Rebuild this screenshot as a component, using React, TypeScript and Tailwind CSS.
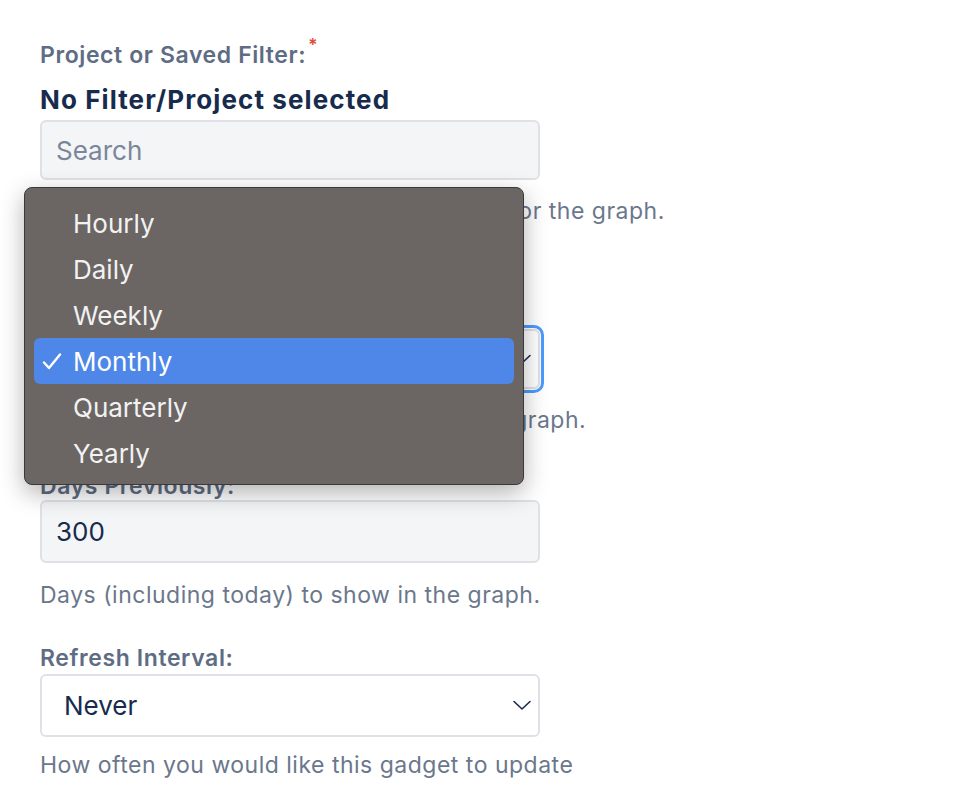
const font = { fontFamily: "Inter, 'Noto Sans', sans-serif" };

const periods = ["Hourly", "Daily", "Weekly", "Monthly", "Quarterly", "Yearly"];

function Chevron() {
  return (
    <svg width="20" height="11" viewBox="0 0 20 11" fill="none" className="shrink-0">
      <polyline points="2,1.5 10,9 18,1.5" stroke="#172b4d" strokeWidth="1.6" strokeLinecap="round" strokeLinejoin="round" />
    </svg>
  );
}

function Label({ text, required }: { text: string; required?: boolean }) {
  return (
    <div className="h-7 whitespace-nowrap text-[23px] leading-7 font-semibold tracking-[0.6px] text-[#5e6c84]">
      {text}
      {required && <span className="relative -top-3 ml-0.5 text-[17px] text-[#e34935]">*</span>}
    </div>
  );
}

function Help({ text }: { text: string }) {
  return <p className="h-7 whitespace-nowrap text-[23px] leading-7 tracking-[0.5px] text-[#6b778c]">{text}</p>;
}

export default function App() {
  return (
    <div className="relative min-h-[800px] bg-white" style={font}>
      <div className="flex w-[500px] flex-col pl-10 pt-[41px]" style={{ boxSizing: "content-box" }}>
        <Label text="Project or Saved Filter:" required />
        <div className="mt-[15px] h-8 whitespace-nowrap text-[26px] leading-8 font-bold tracking-[1.1px] text-[#172b4d]">
          No Filter/Project selected
        </div>
        <div className="mt-1 flex h-[60px] items-center rounded-md border-2 border-[#dfe1e6] bg-[#f4f5f7] px-[14px] text-[26px] text-[#7a869a]">
          Search
        </div>
        <div className="mt-[17px]">
          <Help text="Project or saved filter to use as the basis for the graph." />
        </div>

        <div className="mt-[37px]">
          <Label text="Period:" />
        </div>
        <div className="mt-[39px] flex h-[60px] items-center justify-between rounded-md border-2 border-[#dfe1e6] bg-white pl-[22px] pr-[6px] text-[26px] text-[#172b4d] outline-[3px] outline-[#4c9aff] outline-offset-1">
          Monthly
          <Chevron />
        </div>
        <div className="mt-[17px]">
          <Help text="The length of periods represented on the graph." />
        </div>

        <div className="mt-[38px]">
          <Label text="Days Previously:" />
        </div>
        <div className="flex h-[63px] items-center rounded-md border-2 border-[#dfe1e6] bg-[#f4f5f7] px-[14px] text-[26px] text-[#172b4d]">
          300
        </div>
        <div className="mt-[18px]">
          <Help text="Days (including today) to show in the graph." />
        </div>

        <div className="mt-[35px]">
          <Label text="Refresh Interval:" />
        </div>
        <div className="mt-0.5 flex h-[63px] items-center justify-between rounded-md border-2 border-[#dfe1e6] bg-white pl-[22px] pr-[6px] text-[26px] text-[#172b4d]">
          Never
          <Chevron />
        </div>
        <div className="mt-[14px]">
          <Help text="How often you would like this gadget to update" />
        </div>
      </div>

      {/* open period menu */}
      <div className="absolute left-6 top-[187px] flex h-[298px] w-[500px] flex-col rounded-lg border border-[#3a3a3a] bg-[#6b6664] px-[9px] pt-[12px] shadow-[0_8px_24px_rgba(0,0,0,0.3)]">
        {periods.map((p) => (
          <div
            key={p}
            className={
              p === "Monthly"
                ? "flex h-[46px] items-center rounded-md bg-[#4f87e8] pl-[8px] text-[26px] text-white"
                : "flex h-[46px] items-center pl-[8px] text-[26px] text-[#f2f2f2]"
            }
          >
            <span className="flex w-[31px] items-center">
              {p === "Monthly" && (
                <svg width="20" height="17" viewBox="0 0 20 17" fill="none">
                  <polyline points="2,9.5 7,15 18,1.5" stroke="white" strokeWidth="2.4" strokeLinecap="round" strokeLinejoin="round" />
                </svg>
              )}
            </span>
            {p}
          </div>
        ))}
      </div>
    </div>
  );
}
